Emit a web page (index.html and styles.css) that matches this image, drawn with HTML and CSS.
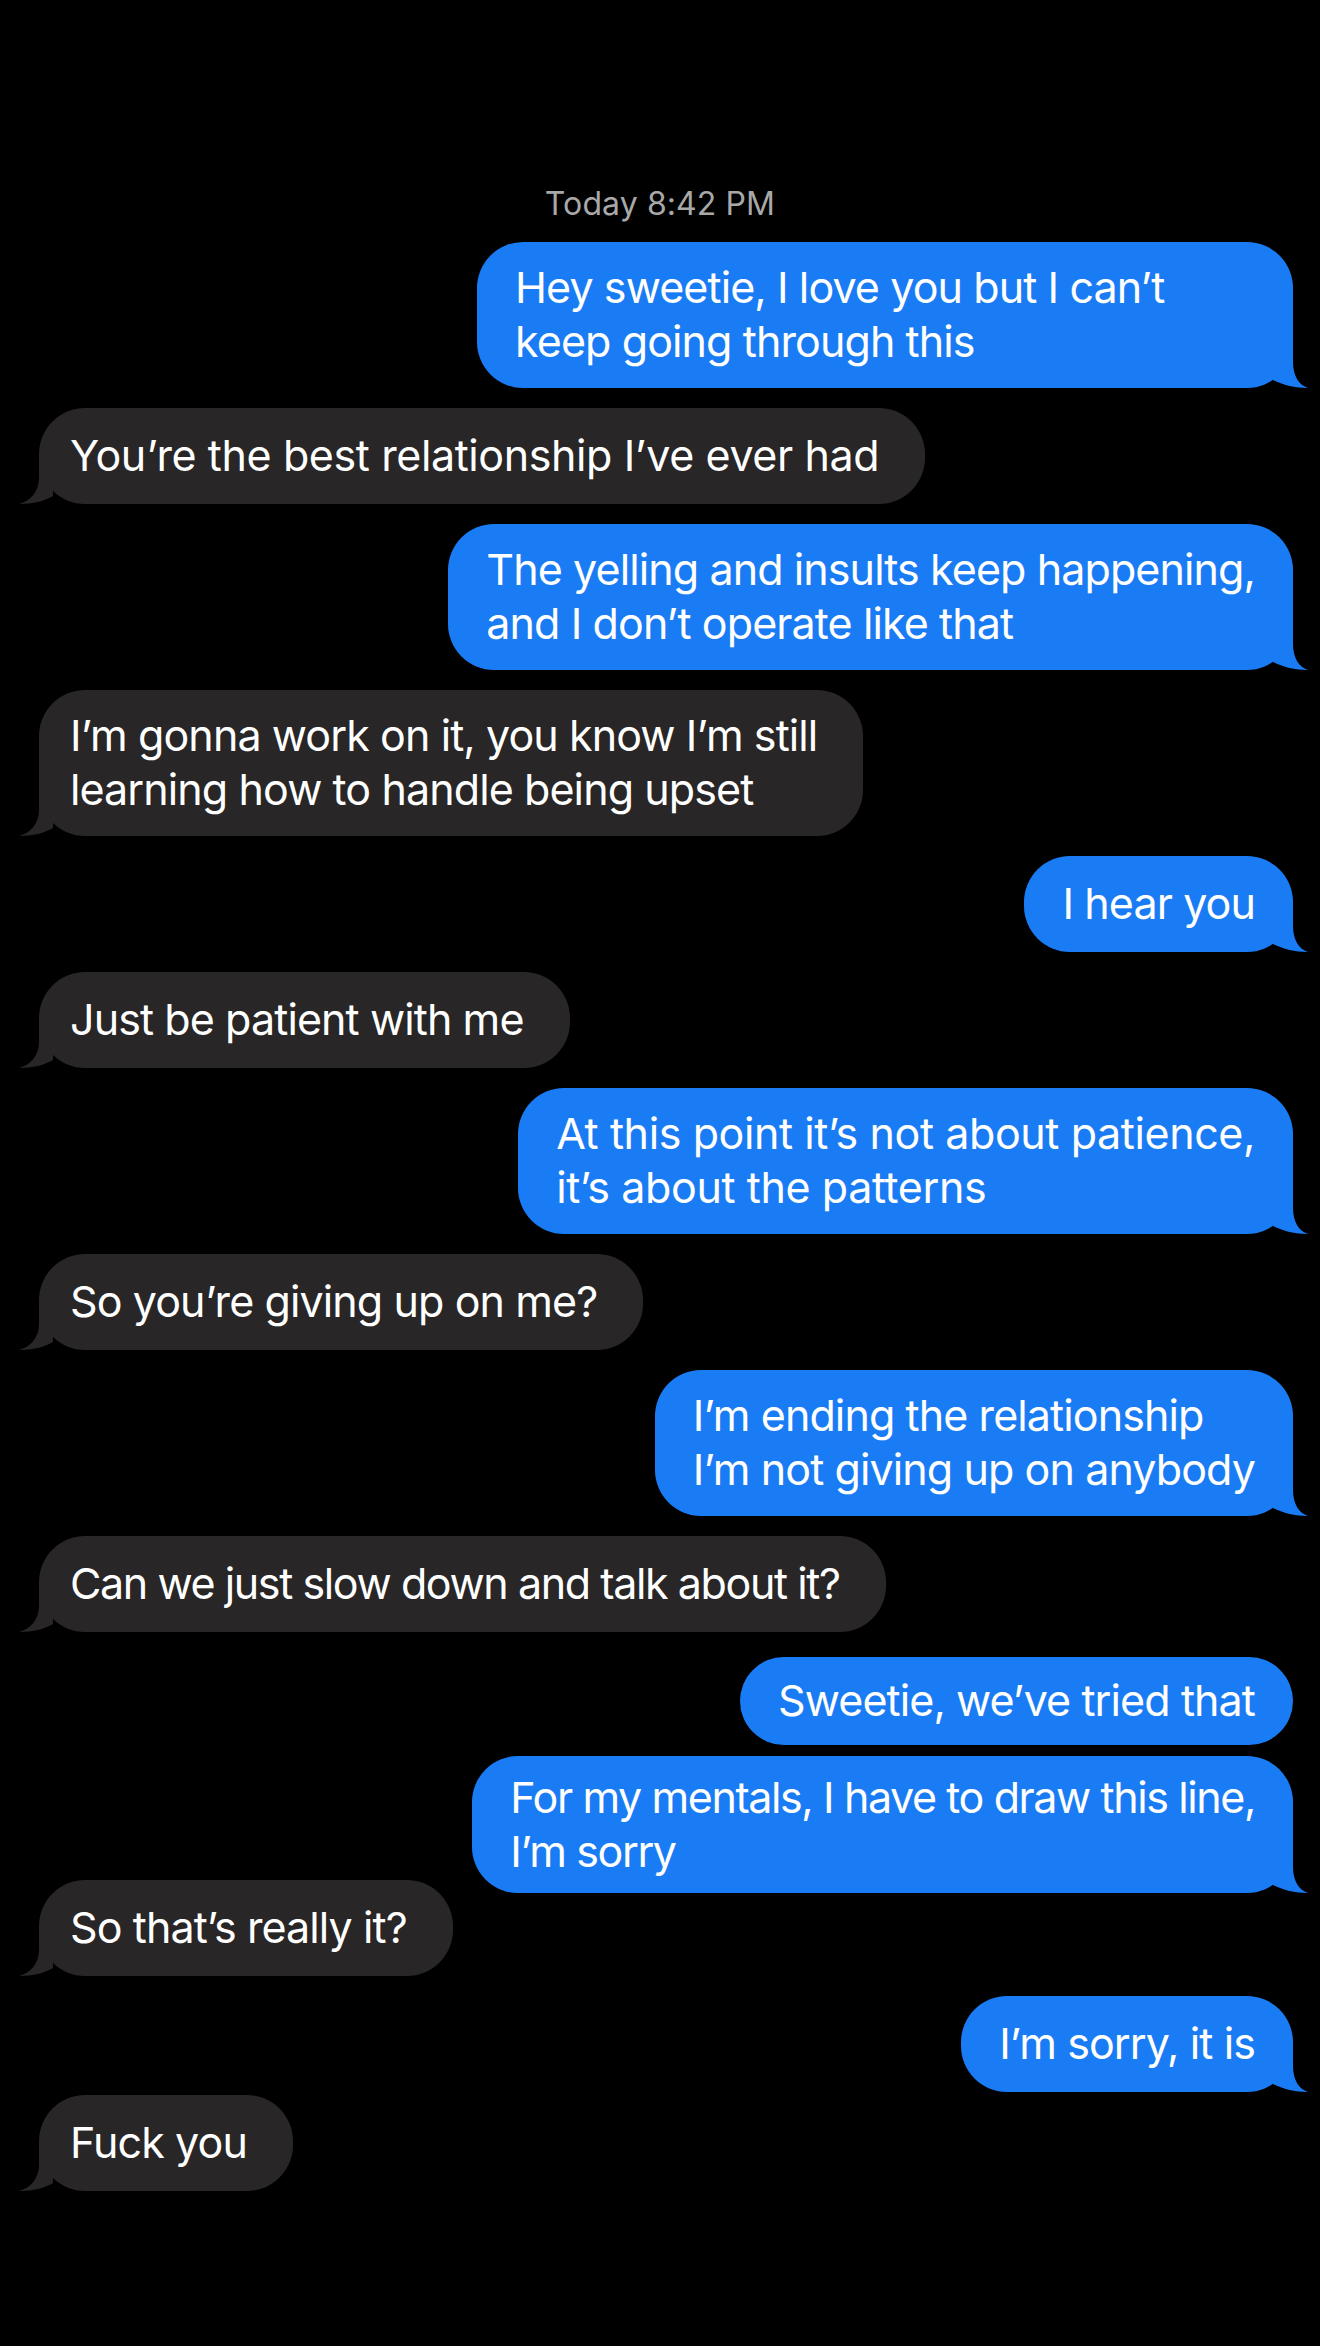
FILE: index.html
```html
<!DOCTYPE html>
<html lang="en">
<head>
<meta charset="utf-8">
<title>Messages</title>
<link rel="stylesheet" href="styles.css">
</head>
<body>
<main class="thread">
  <div class="stamp">Today 8:42 PM</div>

  <div class="bubble sent wide">
    <div class="text">Hey sweetie, I love you but I can’t<br>keep going through this</div>
    <svg class="tail" viewBox="0 0 43 48" aria-hidden="true"><path d="M8 40 C18 45 30 48 43 48 C34 45 28 36 28 22 L28 0 L8 0 Z"/></svg>
  </div>

  <div class="bubble recv loose">
    <div class="text">You’re the best relationship I’ve ever had</div>
    <svg class="tail" viewBox="0 0 42 48" aria-hidden="true"><path d="M34 40 C26 45 14 48 0 48 C11 45 20 36 20 22 L20 0 L34 0 Z"/></svg>
  </div>

  <div class="bubble sent">
    <div class="text">The yelling and insults keep happening,<br>and I don’t operate like that</div>
    <svg class="tail" viewBox="0 0 43 48" aria-hidden="true"><path d="M8 40 C18 45 30 48 43 48 C34 45 28 36 28 22 L28 0 L8 0 Z"/></svg>
  </div>

  <div class="bubble recv">
    <div class="text">I’m gonna work on it, you know I’m still<br>learning how to handle being upset</div>
    <svg class="tail" viewBox="0 0 42 48" aria-hidden="true"><path d="M34 40 C26 45 14 48 0 48 C11 45 20 36 20 22 L20 0 L34 0 Z"/></svg>
  </div>

  <div class="bubble sent">
    <div class="text">I hear you</div>
    <svg class="tail" viewBox="0 0 43 48" aria-hidden="true"><path d="M8 40 C18 45 30 48 43 48 C34 45 28 36 28 22 L28 0 L8 0 Z"/></svg>
  </div>

  <div class="bubble recv">
    <div class="text">Just be patient with me</div>
    <svg class="tail" viewBox="0 0 42 48" aria-hidden="true"><path d="M34 40 C26 45 14 48 0 48 C11 45 20 36 20 22 L20 0 L34 0 Z"/></svg>
  </div>

  <div class="bubble sent loose">
    <div class="text">At this point it’s not about patience,<br>it’s about the patterns</div>
    <svg class="tail" viewBox="0 0 43 48" aria-hidden="true"><path d="M8 40 C18 45 30 48 43 48 C34 45 28 36 28 22 L28 0 L8 0 Z"/></svg>
  </div>

  <div class="bubble recv">
    <div class="text">So you’re giving up on me?</div>
    <svg class="tail" viewBox="0 0 42 48" aria-hidden="true"><path d="M34 40 C26 45 14 48 0 48 C11 45 20 36 20 22 L20 0 L34 0 Z"/></svg>
  </div>

  <div class="bubble sent">
    <div class="text">I’m ending the relationship<br>I’m not giving up on anybody</div>
    <svg class="tail" viewBox="0 0 43 48" aria-hidden="true"><path d="M8 40 C18 45 30 48 43 48 C34 45 28 36 28 22 L28 0 L8 0 Z"/></svg>
  </div>

  <div class="bubble recv tight">
    <div class="text">Can we just slow down and talk about it?</div>
    <svg class="tail" viewBox="0 0 42 48" aria-hidden="true"><path d="M34 40 C26 45 14 48 0 48 C11 45 20 36 20 22 L20 0 L34 0 Z"/></svg>
  </div>

  <div class="bubble sent grouped">
    <div class="text">Sweetie, we’ve tried that</div>
  </div>

  <div class="bubble sent follow tight">
    <div class="text">For my mentals, I have to draw this line,<br>I’m sorry</div>
    <svg class="tail" viewBox="0 0 43 48" aria-hidden="true"><path d="M8 40 C18 45 30 48 43 48 C34 45 28 36 28 22 L28 0 L8 0 Z"/></svg>
  </div>

  <div class="bubble recv overlap">
    <div class="text">So that’s really it?</div>
    <svg class="tail" viewBox="0 0 42 48" aria-hidden="true"><path d="M34 40 C26 45 14 48 0 48 C11 45 20 36 20 22 L20 0 L34 0 Z"/></svg>
  </div>

  <div class="bubble sent">
    <div class="text">I’m sorry, it is</div>
    <svg class="tail" viewBox="0 0 43 48" aria-hidden="true"><path d="M8 40 C18 45 30 48 43 48 C34 45 28 36 28 22 L28 0 L8 0 Z"/></svg>
  </div>

  <div class="bubble recv close">
    <div class="text">Fuck you</div>
    <svg class="tail" viewBox="0 0 42 48" aria-hidden="true"><path d="M34 40 C26 45 14 48 0 48 C11 45 20 36 20 22 L20 0 L34 0 Z"/></svg>
  </div>
</main>
</body>
</html>
```

FILE: styles.css
```css
html, body {
  margin: 0;
  padding: 0;
  background: #000;
}

body {
  min-height: 2346px;
  font-family: "Inter", "Noto Sans", "Liberation Sans", sans-serif;
  color: #fff;
  -webkit-font-smoothing: antialiased;
}

.thread {
  display: flex;
  flex-direction: column;
  padding: 186px 27px 120px 39px;
}

.stamp {
  align-self: center;
  margin-left: -12px;
  font-size: 32px;
  line-height: 36px;
  letter-spacing: 0.1px;
  color: #a8a8a8;
  margin-bottom: 20px;
}

.bubble {
  position: relative;
  box-sizing: border-box;
  min-height: 96px;
  display: flex;
  align-items: center;
  padding: 18px 38px 20px 38px;
  border-radius: 46px;
  font-size: 43px;
  line-height: 54px;
  letter-spacing: -0.9px;
  white-space: nowrap;
  margin-top: 20px;
}

.stamp + .bubble {
  margin-top: 0;
}

.sent {
  align-self: flex-end;
  background: #1a7cf5;
  color: #fff;
}

.recv {
  align-self: flex-start;
  background: #282626;
  color: #fff;
  padding-left: 31px;
  padding-right: 46px;
}

.wide {
  min-width: 816px;
}

.loose {
  letter-spacing: -0.4px;
}

.tight {
  letter-spacing: -1.4px;
}

.tail {
  position: absolute;
  bottom: 0;
  height: 48px;
}

.sent .tail {
  right: -15px;
  width: 43px;
  fill: #1a7cf5;
}

.recv .tail {
  left: -20px;
  width: 42px;
  fill: #282626;
}

.grouped {
  margin-top: 25px;
  min-height: 88px;
  padding-top: 14px;
  padding-bottom: 16px;
}

.follow {
  margin-top: 11px;
  padding-top: 14px;
  padding-bottom: 15px;
}

.overlap {
  margin-top: -13px;
}

.close {
  margin-top: 3px;
}
```
